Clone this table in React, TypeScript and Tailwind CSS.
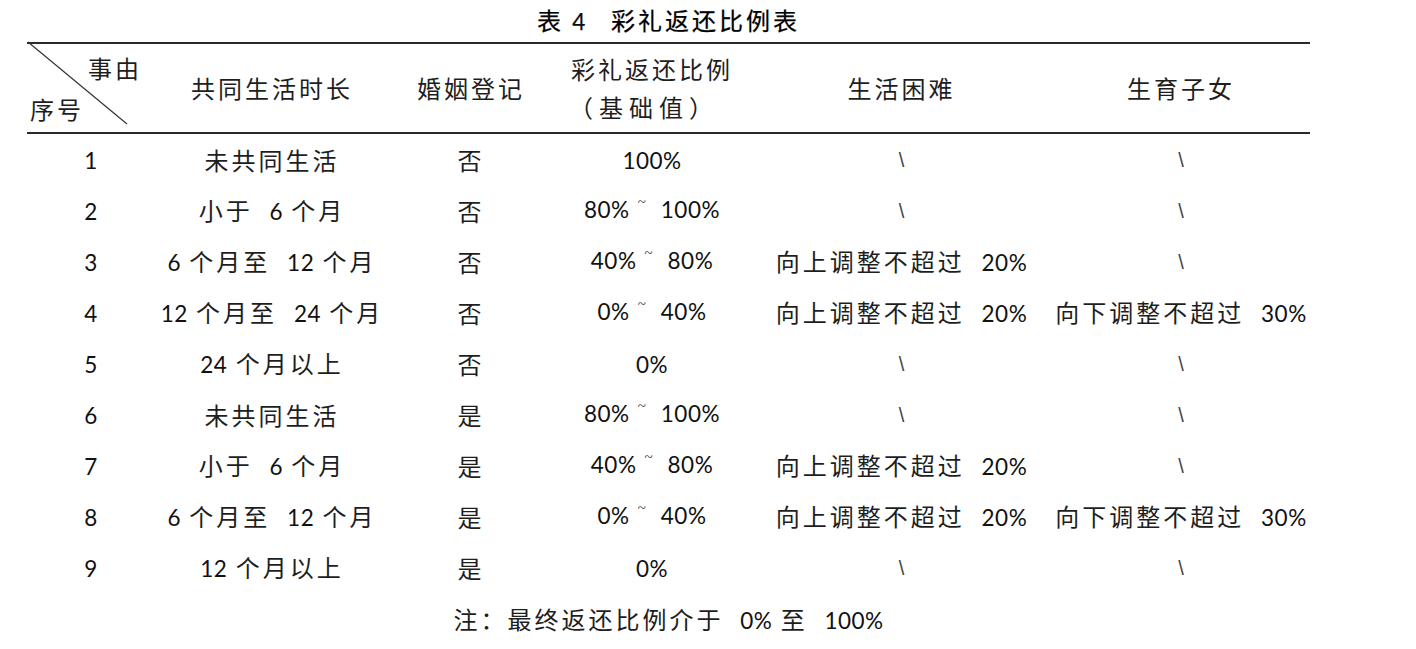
import React from "react";

type Row = [string, string, string, string, string, string];

const rows: Row[] = [
  ["1", "未共同生活", "否", "100%", "\\", "\\"],
  ["2", "小于  6 个月", "否", "80%~100%", "\\", "\\"],
  ["3", "6 个月至  12 个月", "否", "40%~80%", "向上调整不超过  20%", "\\"],
  ["4", "12 个月至  24 个月", "否", "0%~40%", "向上调整不超过  20%", "向下调整不超过  30%"],
  ["5", "24 个月以上", "否", "0%", "\\", "\\"],
  ["6", "未共同生活", "是", "80%~100%", "\\", "\\"],
  ["7", "小于  6 个月", "是", "40%~80%", "向上调整不超过  20%", "\\"],
  ["8", "6 个月至  12 个月", "是", "0%~40%", "向上调整不超过  20%", "向下调整不超过  30%"],
  ["9", "12 个月以上", "是", "0%", "\\", "\\"],
];

// 中文与数字分开排版：数字用 Lato（接近 Calibri），中文用 Noto CJK
function Mixed({ text }: { text: string }) {
  if (text === "\\") {
    return (
      <span className="font-['Liberation_Sans',sans-serif] text-[20px] font-light text-[#444]">\</span>
    );
  }
  const parts = text.split(/([0-9%]+|~)/).filter((p) => p !== "");
  return (
    <span className="whitespace-pre">
      {parts.map((p, i) =>
        p === "~" ? (
          <span
            key={i}
            className="relative -top-[11px] ml-[8px] mr-[15px] inline-block font-['Liberation_Serif',serif] text-[15px] text-[#333]"
          >
            ~
          </span>
        ) : /[0-9%]/.test(p) ? (
          <span key={i} className="font-['Lato',sans-serif] text-[22.5px] tracking-[0.5px] text-[#111]">
            {p}
          </span>
        ) : (
          <span key={i} className="font-['Noto_Sans_CJK_SC',sans-serif] text-[24px] tracking-[3px]">
            {p}
          </span>
        )
      )}
    </span>
  );
}

export default function App() {
  return (
    <div className="min-h-[649px] w-[1416px] bg-white text-[#1e1e1e] font-['Noto_Sans_CJK_SC',sans-serif]">
      <div className="ml-[27px] w-[1283px]">
        {/* 标题 */}
        <div className="flex h-[42px] items-center justify-center text-black leading-[30px] [-webkit-text-stroke:0.25px_#000]">
          <Mixed text="表 4   彩礼返还比例表" />
        </div>

        {/* 表头 */}
        <div className="grid h-[92px] grid-cols-[128px_234px_164px_198px_301px_258px] border-y-2 border-[#2a2a2a] text-[24px] leading-[30px]">
          <div className="relative flex flex-col justify-between pb-[8px] pt-[9px]">
            <svg className="absolute left-0 top-0 overflow-visible" width="128" height="88">
              <line x1="1" y1="-2" x2="100" y2="80" stroke="#333" strokeWidth="1.2" />
            </svg>
            <div className="pl-[61px] tracking-[3px]">事由</div>
            <div className="pl-[3px] tracking-[3px]">序号</div>
          </div>
          <div className="flex items-center justify-center tracking-[3px]">共同生活时长</div>
          <div className="flex items-center justify-center tracking-[3px]">婚姻登记</div>
          <div className="flex flex-col items-center justify-center">
            <div className="tracking-[3px]">彩礼返还比例</div>
            <div className="mt-[8px] pr-[16px] tracking-[6px]">（基础值）</div>
          </div>
          <div className="flex items-center justify-center tracking-[3px]">生活困难</div>
          <div className="flex items-center justify-center tracking-[3px]">生育子女</div>
        </div>

        {/* 表体 */}
        {rows.map((r) => (
          <div
            key={r[0]}
            className="grid h-[51px] grid-cols-[128px_234px_164px_198px_301px_258px] text-[24px] leading-[30px]"
          >
            {r.map((c, j) => (
              <div key={j} className="flex items-center justify-center">
                <Mixed text={c} />
              </div>
            ))}
          </div>
        ))}

        {/* 注 */}
        <div className="flex h-[56px] items-center justify-center pb-[2px] text-[24px] leading-[30px]">
          <Mixed text="注：最终返还比例介于  0% 至  100%" />
        </div>
      </div>
    </div>
  );
}
